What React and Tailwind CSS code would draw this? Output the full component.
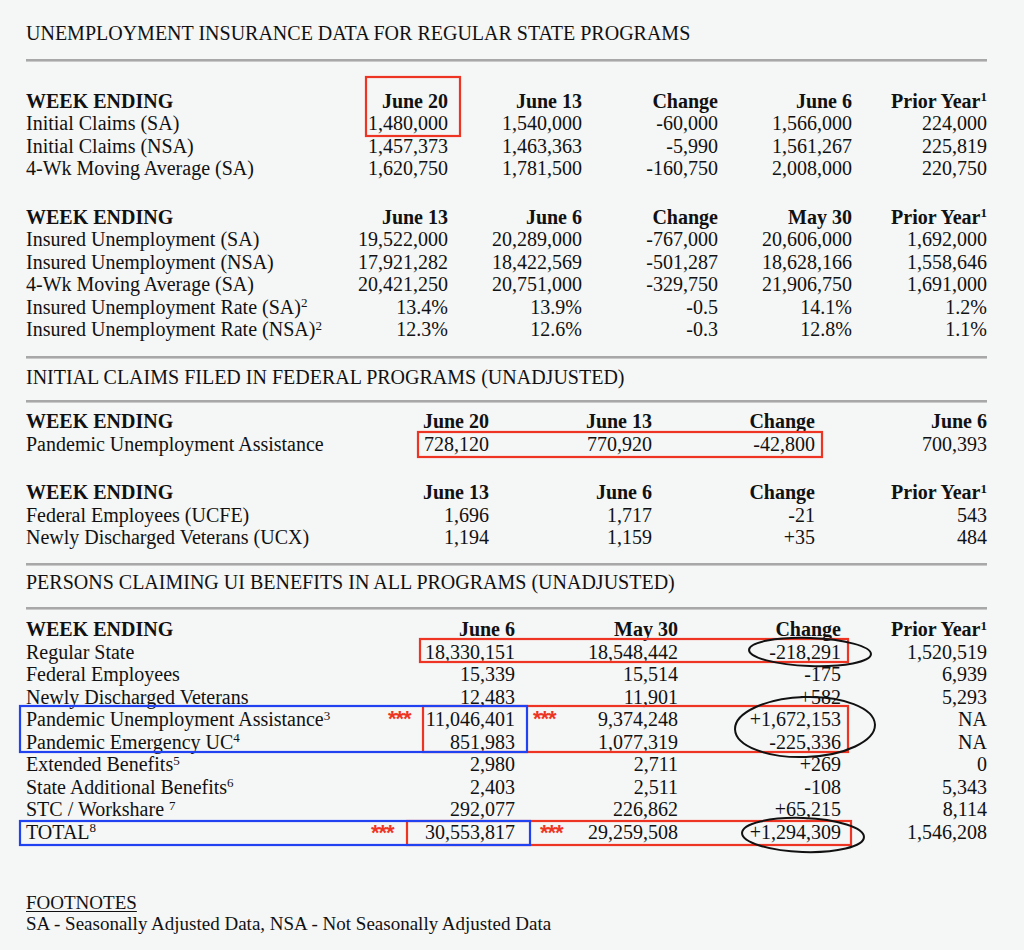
import React from "react"

const cols1 = "grid grid-cols-[322px_100px_134px_136px_134px_135px]"
const cols3 = "grid grid-cols-[363px_100px_163px_163px_172px]"
const cols5 = "grid grid-cols-[389px_100px_163px_163px_146px]"

const Sup = ({ children }) => <sup className="text-[13px]">{children}</sup>

function Rule({ className }) {
  return <div className={"h-[3px] bg-[#a8a8a8] border-b border-[#c9c9c9] " + className} />
}

function Table({ cols, head, rows, className = "" }) {
  return (
    <div className={cols + " " + className}>
      {head.map((h, i) => (
        <div key={"h" + i} className={"font-bold " + (i === 0 ? "text-left" : "text-right")}>
          {h}
        </div>
      ))}
      {rows.map((r, ri) =>
        r.map((c, ci) => (
          <div key={ri + "-" + ci} className={ci === 0 ? "text-left whitespace-nowrap" : "text-right"}>
            {c}
          </div>
        ))
      )}
    </div>
  )
}

const priorYear = <>Prior Year<Sup>1</Sup></>

const star = "absolute text-[#ee3524] font-['Liberation_Sans',sans-serif] font-bold text-[22px] leading-[22px] tracking-[-1px]"

export default function App() {
  return (
    <div className="relative min-h-[950px] w-[1024px] bg-[#f5f6f6] text-[#111] font-['Liberation_Serif','Times_New_Roman',serif] text-[20px] leading-[22.5px]">
      <div className="w-[961px] ml-[26px] pt-[22px]">
        <div>UNEMPLOYMENT INSURANCE DATA FOR REGULAR STATE PROGRAMS</div>
        <Rule className="mt-[14px]" />

        <Table
          cols={cols1}
          className="mt-[28px]"
          head={["WEEK ENDING", "June 20", "June 13", "Change", "June 6", priorYear]}
          rows={[
            ["Initial Claims (SA)", "1,480,000", "1,540,000", "-60,000", "1,566,000", "224,000"],
            ["Initial Claims (NSA)", "1,457,373", "1,463,363", "-5,990", "1,561,267", "225,819"],
            ["4-Wk Moving Average (SA)", "1,620,750", "1,781,500", "-160,750", "2,008,000", "220,750"],
          ]}
        />

        <Table
          cols={cols1}
          className="mt-[26px]"
          head={["WEEK ENDING", "June 13", "June 6", "Change", "May 30", priorYear]}
          rows={[
            ["Insured Unemployment (SA)", "19,522,000", "20,289,000", "-767,000", "20,606,000", "1,692,000"],
            ["Insured Unemployment (NSA)", "17,921,282", "18,422,569", "-501,287", "18,628,166", "1,558,646"],
            ["4-Wk Moving Average (SA)", "20,421,250", "20,751,000", "-329,750", "21,906,750", "1,691,000"],
            [<>Insured Unemployment Rate (SA)<Sup>2</Sup></>, "13.4%", "13.9%", "-0.5", "14.1%", "1.2%"],
            [<>Insured Unemployment Rate (NSA)<Sup>2</Sup></>, "12.3%", "12.6%", "-0.3", "12.8%", "1.1%"],
          ]}
        />

        <Rule className="mt-[15px]" />
        <div className="mt-[7px]">INITIAL CLAIMS FILED IN FEDERAL PROGRAMS (UNADJUSTED)</div>
        <Rule className="mt-[12px]" />

        <Table
          cols={cols3}
          className="mt-[7px]"
          head={["WEEK ENDING", "June 20", "June 13", "Change", "June 6"]}
          rows={[["Pandemic Unemployment Assistance", "728,120", "770,920", "-42,800", "700,393"]]}
        />

        <Table
          cols={cols3}
          className="mt-[26px]"
          head={["WEEK ENDING", "June 13", "June 6", "Change", priorYear]}
          rows={[
            ["Federal Employees (UCFE)", "1,696", "1,717", "-21", "543"],
            ["Newly Discharged Veterans (UCX)", "1,194", "1,159", "+35", "484"],
          ]}
        />

        <Rule className="mt-[14px]" />
        <div className="mt-[5px]">PERSONS CLAIMING UI BENEFITS IN ALL PROGRAMS (UNADJUSTED)</div>
        <Rule className="mt-[14px]" />

        <Table
          cols={cols5}
          className="mt-[8px]"
          head={["WEEK ENDING", "June 6", "May 30", "Change", priorYear]}
          rows={[
            ["Regular State", "18,330,151", "18,548,442", "-218,291", "1,520,519"],
            ["Federal Employees", "15,339", "15,514", "-175", "6,939"],
            ["Newly Discharged Veterans", "12,483", "11,901", "+582", "5,293"],
            [<>Pandemic Unemployment Assistance<Sup>3</Sup></>, "11,046,401", "9,374,248", "+1,672,153", "NA"],
            [<>Pandemic Emergency UC<Sup>4</Sup></>, "851,983", "1,077,319", "-225,336", "NA"],
            [<>Extended Benefits<Sup>5</Sup></>, "2,980", "2,711", "+269", "0"],
            [<>State Additional Benefits<Sup>6</Sup></>, "2,403", "2,511", "-108", "5,343"],
            [<>STC / Workshare <Sup>7</Sup></>, "292,077", "226,862", "+65,215", "8,114"],
            [<>TOTAL<Sup>8</Sup></>, "30,553,817", "29,259,508", "+1,294,309", "1,546,208"],
          ]}
        />

        <div className="mt-[49px] text-[19px] leading-[21px]">
          <div className="underline underline-offset-2">FOOTNOTES</div>
          <div>SA - Seasonally Adjusted Data, NSA - Not Seasonally Adjusted Data</div>
        </div>
      </div>

      {/* annotation marks drawn over the page */}
      <svg className="absolute left-0 top-0 pointer-events-none" width="1024" height="950" fill="none">
        <g stroke="#ee3524" strokeWidth="2.2">
          <rect x="366" y="77" width="94" height="59" />
          <rect x="418" y="432" width="404" height="25" />
          <rect x="420" y="639" width="428" height="23" />
          <rect x="423" y="706" width="425" height="46" />
          <rect x="407" y="821" width="444" height="24" />
        </g>
        <g stroke="#2142f0" strokeWidth="2.2">
          <rect x="20" y="706" width="507" height="46" />
          <rect x="20" y="821" width="510" height="24" />
        </g>
        <g stroke="#111" strokeWidth="2">
          <ellipse cx="810" cy="652" rx="61" ry="14" transform="rotate(2 810 652)" />
          <ellipse cx="805" cy="727" rx="70" ry="30" transform="rotate(-2 805 727)" />
          <ellipse cx="803" cy="835" rx="61" ry="17" transform="rotate(2 803 835)" />
        </g>
      </svg>
      <span className={star + " left-[388px] top-[708px]"}>***</span>
      <span className={star + " left-[533px] top-[708px]"}>***</span>
      <span className={star + " left-[371px] top-[822px]"}>***</span>
      <span className={star + " left-[540px] top-[822px]"}>***</span>
    </div>
  )
}
